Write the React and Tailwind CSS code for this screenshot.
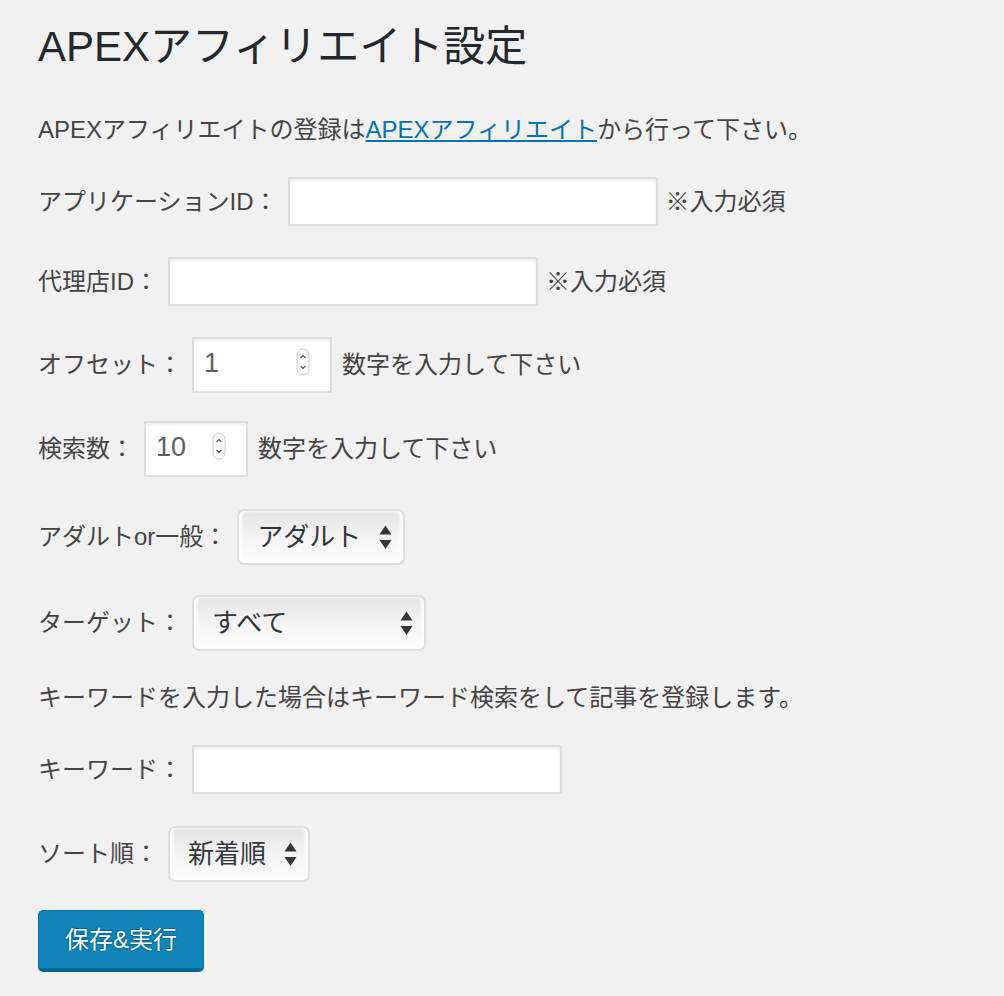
import { useState } from "react";

const font = { fontFamily: "'Liberation Sans', 'Noto Sans CJK JP', sans-serif" };

const Spinner = () => (
  <svg width="14" height="28" viewBox="0 0 14 28" className="shrink-0">
    <rect x="1" y="1" width="12" height="26" rx="6" fill="#fff" stroke="#c9c9c9" />
    <path d="M4.5 10 L7 7.5 L9.5 10" fill="none" stroke="#555" strokeWidth="1.2" />
    <path d="M4.5 18 L7 20.5 L9.5 18" fill="none" stroke="#555" strokeWidth="1.2" />
  </svg>
);

const Arrows = () => (
  <svg width="13" height="25" viewBox="0 0 13 25" className="shrink-0">
    <path d="M0.5 9.5 L6.5 0.5 L12.5 9.5 Z" fill="#32373c" />
    <path d="M0.5 15 L12.5 15 L6.5 24 Z" fill="#32373c" />
  </svg>
);

const TextInput = ({ value, onChange }) => (
  <input
    type="text"
    value={value}
    onChange={(e) => onChange(e.target.value)}
    className="w-[370px] h-[49px] border-2 border-[#dddddd] bg-white px-2 text-[24px] text-[#32373c] shadow-[inset_0_2px_3px_rgba(0,0,0,0.07)] outline-none"
  />
);

const NumberBox = ({ value, width }) => (
  <div
    className={`${width} h-[56px] flex items-start border-2 border-[#dddddd] bg-white shadow-[inset_0_2px_3px_rgba(0,0,0,0.07)] pl-[10px] pr-[20px] pt-[9px]`}
  >
    <span className="flex-1 text-[27px] leading-[30px] text-[#5b6066]">{value}</span>
    <Spinner />
  </div>
);

const SelectBox = ({ value, width }) => (
  <div
    className={`${width} h-[56px] flex items-center justify-between rounded-[7px] border-2 border-[#dedede] bg-gradient-to-b from-[#e4e4e4] via-[#f4f4f4] to-[#fdfdfd] pl-[18px] pr-[11px] shadow-[inset_3px_0_3px_rgba(255,255,255,0.9),inset_-3px_0_3px_rgba(255,255,255,0.9)]`}
  >
    <span className="text-[26px] leading-[32px] text-[#32373c]">{value}</span>
    <Arrows />
  </div>
);

const Row = ({ label, mt, children }) => (
  <div className={`flex items-center ${mt}`}>
    <span className="mr-[10px] text-[24px] leading-[32px]">{label}</span>
    {children}
  </div>
);

export default function App() {
  const [appId, setAppId] = useState("");
  const [agentId, setAgentId] = useState("");
  const [keyword, setKeyword] = useState("");

  return (
    <div className="min-h-screen bg-[#f1f1f1] pl-[38px] pt-[21px] pb-[26px] text-[#444]" style={font}>
      <h1 className="text-[42px] leading-[52px] font-normal text-[#23282d]">APEXアフィリエイト設定</h1>

      <p className="mt-[41px] text-[24px] leading-[32px]">
        APEXアフィリエイトの登録は
        <a href="#" className="text-[#0073aa] underline">APEXアフィリエイト</a>
        から行って下さい。
      </p>

      <Row label="アプリケーションID：" mt="mt-[31px]">
        <TextInput value={appId} onChange={setAppId} />
        <span className="ml-[8px] text-[24px] leading-[32px]">※入力必須</span>
      </Row>

      <Row label="代理店ID：" mt="mt-[31px]">
        <TextInput value={agentId} onChange={setAgentId} />
        <span className="ml-[8px] text-[24px] leading-[32px]">※入力必須</span>
      </Row>

      <Row label="オフセット：" mt="mt-[31px]">
        <NumberBox value="1" width="w-[140px]" />
        <span className="ml-[10px] text-[24px] leading-[32px]">数字を入力して下さい</span>
      </Row>

      <Row label="検索数：" mt="mt-[28px]">
        <NumberBox value="10" width="w-[104px]" />
        <span className="ml-[10px] text-[24px] leading-[32px]">数字を入力して下さい</span>
      </Row>

      <Row label="アダルトor一般：" mt="mt-[32px]">
        <SelectBox value="アダルト" width="w-[168px]" />
      </Row>

      <Row label="ターゲット：" mt="mt-[30px]">
        <SelectBox value="すべて" width="w-[234px]" />
      </Row>

      <p className="mt-[31px] text-[24px] leading-[32px]">
        キーワードを入力した場合はキーワード検索をして記事を登録します。
      </p>

      <Row label="キーワード：" mt="mt-[31px]">
        <TextInput value={keyword} onChange={setKeyword} />
      </Row>

      <Row label="ソート順：" mt="mt-[32px]">
        <SelectBox value="新着順" width="w-[142px]" />
      </Row>

      <button
        type="button"
        className="mt-[28px] w-[166px] h-[62px] rounded-[5px] border border-[#0073aa] border-b-[4px] border-b-[#006799] bg-[#1285b8] text-[24px] leading-[32px] text-white [text-shadow:0_-1px_1px_#006799,1px_0_1px_#006799,0_1px_1px_#006799,-1px_0_1px_#006799]"
      >
        保存&amp;実行
      </button>
    </div>
  );
}
